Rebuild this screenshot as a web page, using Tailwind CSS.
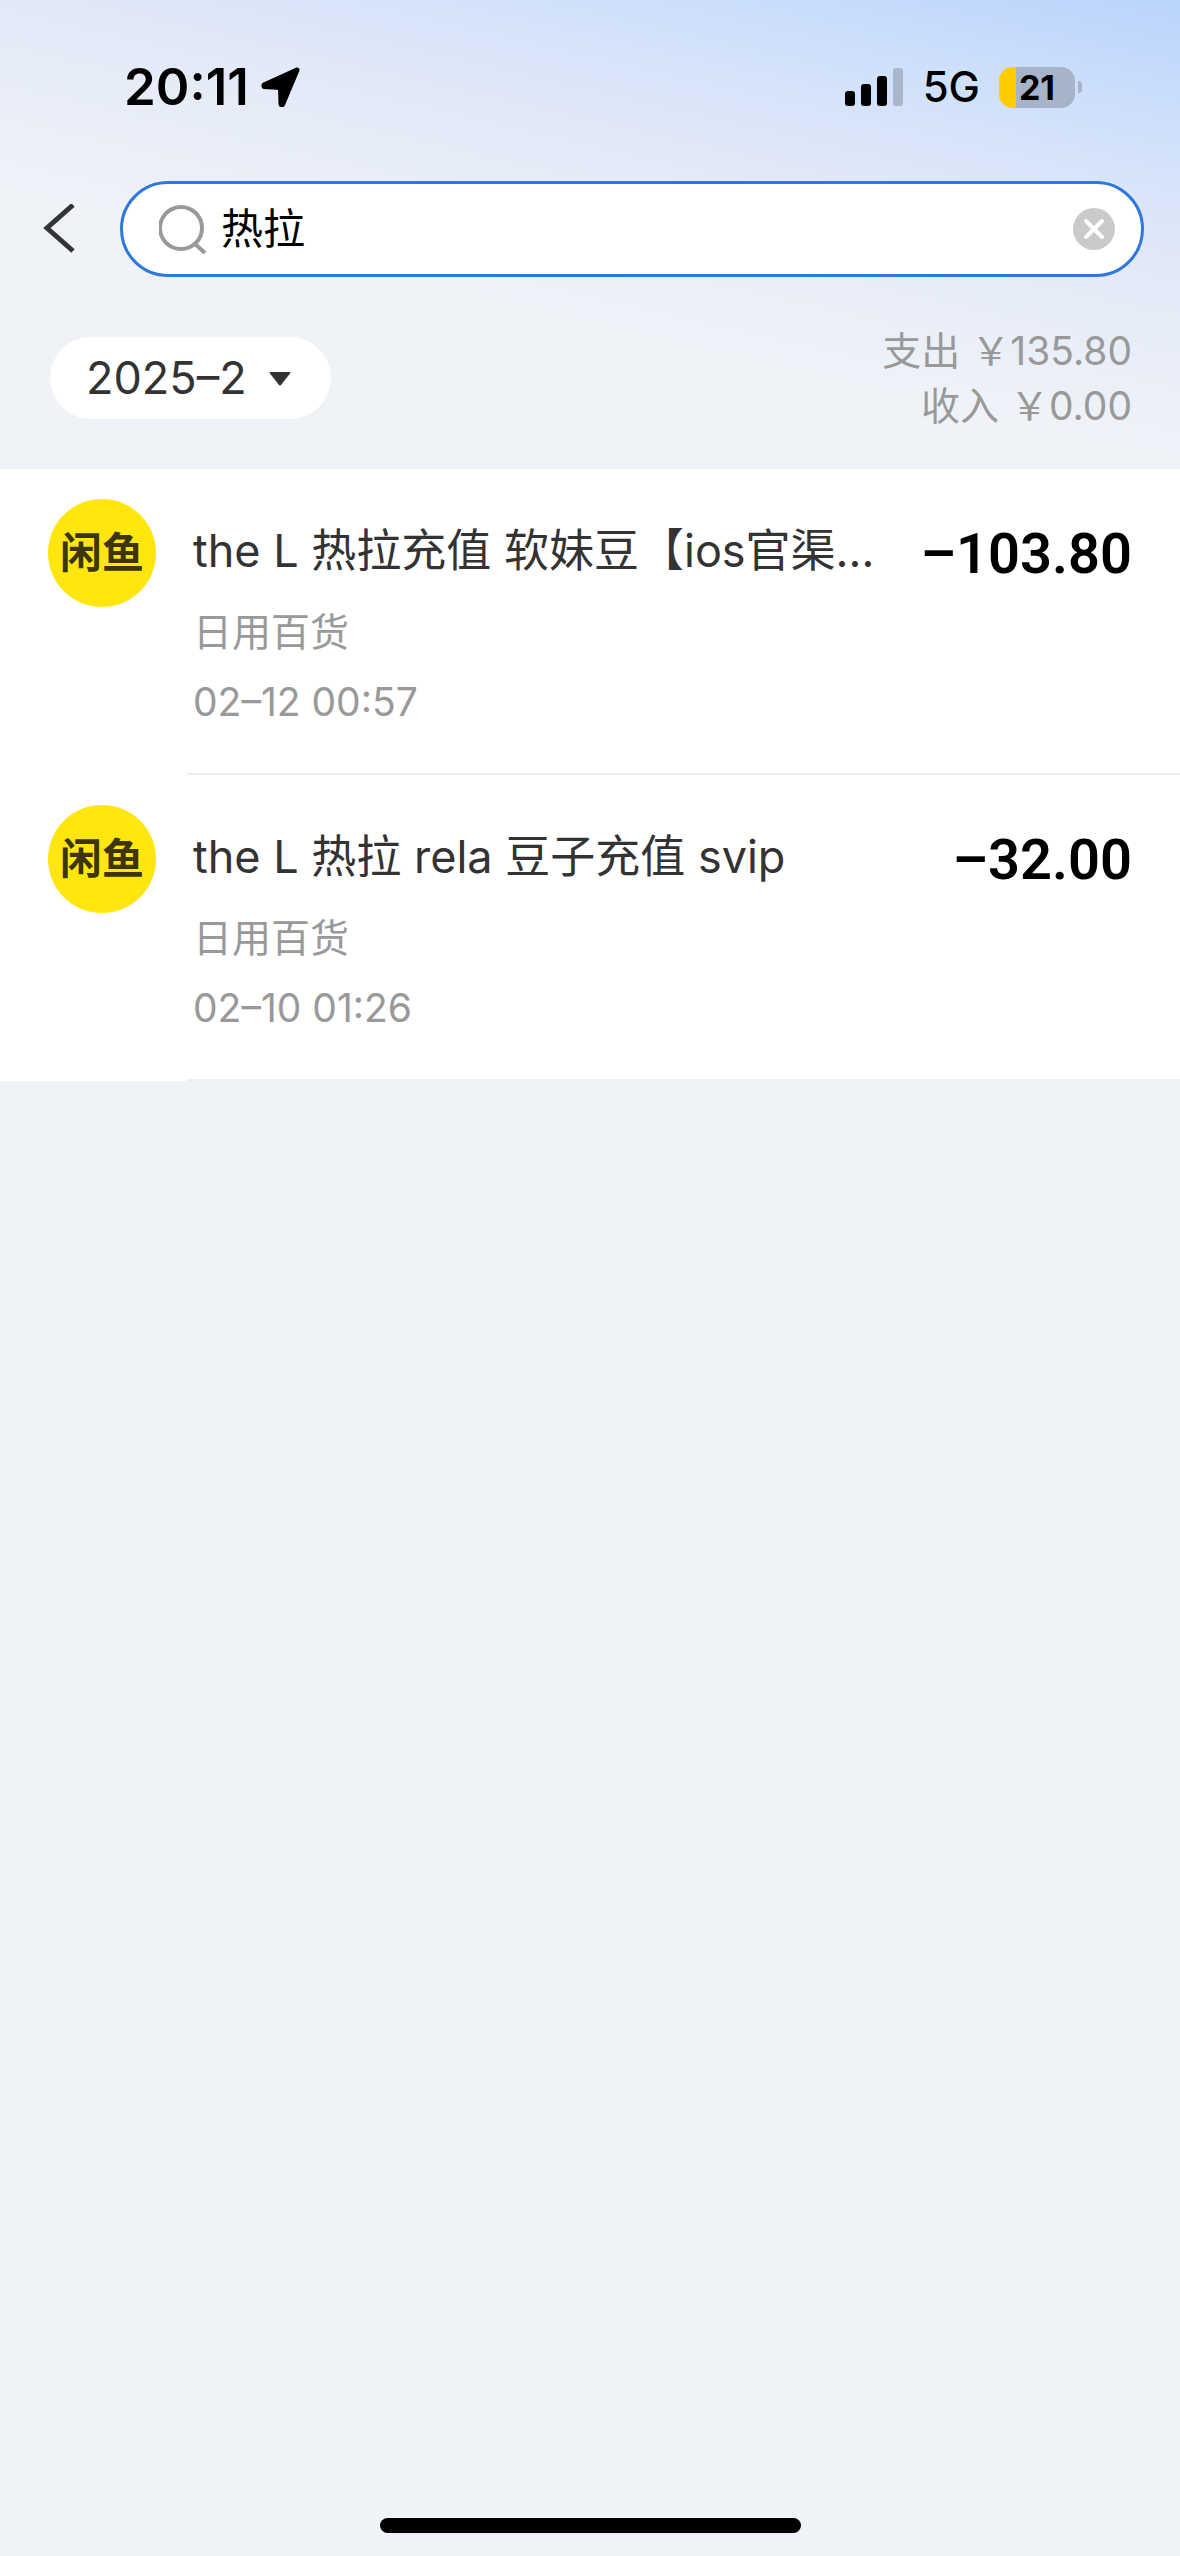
<!DOCTYPE html>
<html lang="zh-CN">
<head>
  <meta charset="UTF-8" />
  <meta name="viewport" content="width=device-width, initial-scale=1.0" />
  <title>账单搜索</title>
  <script src="https://cdn.jsdelivr.net/npm/@tailwindcss/browser@4"></script>
</head>
<body class="bg-[#eff3f8] min-h-screen flex flex-col font-['Inter','Noto_Sans_CJK_SC',sans-serif] text-[#333333]">

  <header class="bg-[linear-gradient(193deg,#bad4fc_0%,#cfe0fb_18%,#dae5f9_28%,#e3e9f7_38%,#e9eef8_50%,#eff3f8_62%)]">
    <!-- Status bar -->
    <div class="flex items-center justify-between pl-[124px] pr-[98px] pt-[57px] text-black">
      <div class="flex items-center gap-3">
        <span class="text-[51px] leading-[60px] font-semibold">20:11</span>
        <svg class="w-[39px] h-[41px]" viewBox="0 0 39 41" fill="currentColor" stroke="currentColor" stroke-width="5" stroke-linejoin="round" aria-hidden="true">
          <path d="M36 3 L3 18 L3 19.500 L19.500 20.500 L20 37.500 L21.500 37.500 Z" />
        </svg>
      </div>
      <div class="flex items-center gap-[19px]">
        <svg class="w-[59px] h-[38px]" viewBox="0 0 59 38" aria-hidden="true">
          <rect x="0" y="23" width="10" height="15" rx="3" />
          <rect x="16" y="16" width="10" height="22" rx="3" />
          <rect x="32" y="8" width="10" height="30" rx="3" />
          <rect x="48" y="0" width="10" height="38" rx="3" fill="#a9b7cc" />
        </svg>
        <span class="text-[42px] leading-[60px] font-medium">5G</span>
        <div class="flex items-center gap-[3px]">
          <div class="flex items-center justify-center w-[76px] h-[41px] rounded-[14px] bg-[linear-gradient(90deg,#ffcc00_17px,#a6b3c8_17px)] text-[34px] font-bold">21</div>
          <span class="w-1 h-3 rounded-r-full bg-[#a6b3c8]"></span>
        </div>
      </div>
    </div>

    <!-- Search -->
    <div class="flex items-center pl-[42px] pr-9 mt-[64px]">
      <button type="button" aria-label="返回" class="w-[78px] h-[96px] flex items-center">
        <svg class="w-[34px] h-[50px]" viewBox="0 0 34 50" fill="none" stroke="#333333" stroke-width="5" aria-hidden="true">
          <path d="M31 1 L5 24 L31 47" />
        </svg>
      </button>
      <label class="flex-1 flex items-center h-[96px] pl-9 pr-[26px] rounded-full bg-white border-3 border-[#2d77dd]">
        <svg class="w-[50px] h-[50px]" viewBox="0 0 50 50" fill="none" stroke="#999999" stroke-width="4" aria-hidden="true">
          <circle cx="22" cy="24" r="21" />
          <path d="M35 39 L46 49" />
        </svg>
        <input type="text" value="热拉" aria-label="搜索" class="flex-1 min-w-0 ml-3 text-[42px] leading-[60px] text-black outline-none" />
        <button type="button" aria-label="清除">
          <svg class="w-[42px] h-[42px]" viewBox="0 0 42 42" fill="none" stroke="#ffffff" stroke-width="4" stroke-linecap="round" aria-hidden="true">
            <circle cx="21" cy="21" r="21" fill="#cacaca" stroke="none" />
            <path d="M13 13 L29 29 M29 13 L13 29" />
          </svg>
        </button>
      </label>
    </div>

    <!-- Month and totals -->
    <div class="flex items-center justify-between pl-[50px] pr-[48px] mt-[46px] pb-[36px]">
      <div class="relative">
        <select aria-label="月份" class="block appearance-none w-[281px] h-[82px] pl-9 rounded-full bg-white text-[45px] outline-none">
          <option>2025–2</option>
        </select>
        <svg class="absolute right-10 top-[35px] w-[22px] h-[14px] pointer-events-none" viewBox="0 0 22 14" fill="#333333" aria-hidden="true">
          <path d="M1.500 0 H20.500 Q22 0 21 1.500 L12 13 Q11 14 10 13 L1 1.500 Q0 0 1.500 0 Z" />
        </svg>
      </div>
      <div class="text-right text-[39px] leading-[55px] text-[#999999]">
        <p>支出 ￥135.80</p>
        <p>收入 ￥0.00</p>
      </div>
    </div>
  </header>

  <!-- Bills -->
  <main>
    <ul class="bg-white">
      <li class="flex h-[306px] pl-12">
        <div class="shrink-0 mt-[30px] mr-[31px] w-[108px] h-[108px] rounded-full bg-[#ffe60f] flex items-center justify-center text-[42px] leading-[60px] font-bold text-[#3d3408]">闲鱼</div>
        <div class="flex-1 min-w-0 flex justify-between pl-[6px] pr-12 pt-[52px] border-b-2 border-[#eeeff1]">
          <div class="text-[39px] leading-[56px] text-[#999999]">
            <h2 class="text-[45px] leading-[60px] text-[#333333] whitespace-nowrap">the L 热拉充值 软妹豆【ios官渠…</h2>
            <p class="mt-[23px]">日用百货</p>
            <p class="mt-[14px]">02–12 00:57</p>
          </div>
          <span class="font-['Roboto',sans-serif] text-[56px] leading-[66px] font-semibold text-black">–103.80</span>
        </div>
      </li>
      <li class="flex h-[306px] pl-12">
        <div class="shrink-0 mt-[30px] mr-[31px] w-[108px] h-[108px] rounded-full bg-[#ffe60f] flex items-center justify-center text-[42px] leading-[60px] font-bold text-[#3d3408]">闲鱼</div>
        <div class="flex-1 min-w-0 flex justify-between pl-[6px] pr-12 pt-[52px] border-b-2 border-[#eeeff1]">
          <div class="text-[39px] leading-[56px] text-[#999999]">
            <h2 class="text-[45px] leading-[60px] text-[#333333] whitespace-nowrap">the L 热拉 rela 豆子充值 svip</h2>
            <p class="mt-[23px]">日用百货</p>
            <p class="mt-[14px]">02–10 01:26</p>
          </div>
          <span class="font-['Roboto',sans-serif] text-[56px] leading-[66px] font-semibold text-black">–32.00</span>
        </div>
      </li>
    </ul>
  </main>

  <!-- Home indicator -->
  <footer class="mt-auto pb-[23px] flex justify-center">
    <div class="w-[421px] h-[15px] rounded-full bg-black"></div>
  </footer>

</body>
</html>
